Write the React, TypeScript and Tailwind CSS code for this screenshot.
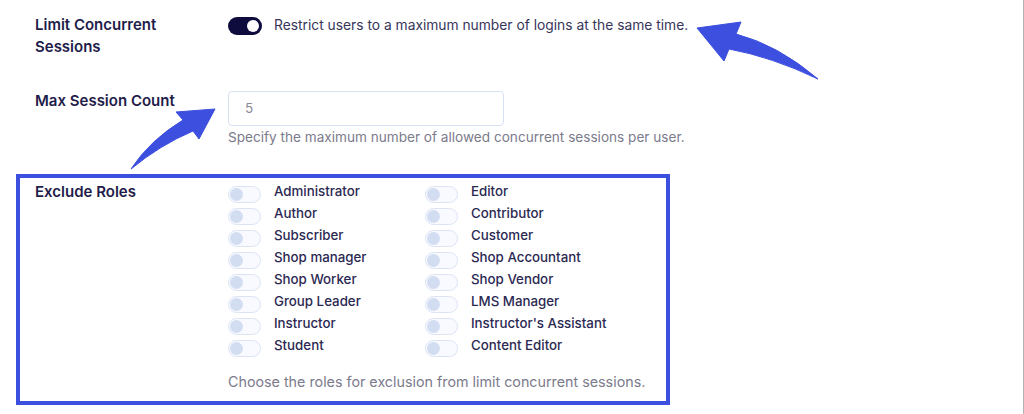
import React from "react";

const roles: [string, string][] = [
  ["Administrator", "Editor"],
  ["Author", "Contributor"],
  ["Subscriber", "Customer"],
  ["Shop manager", "Shop Accountant"],
  ["Shop Worker", "Shop Vendor"],
  ["Group Leader", "LMS Manager"],
  ["Instructor", "Instructor's Assistant"],
  ["Student", "Content Editor"],
];

function OffToggle() {
  return (
    <div className="mt-[4px] flex h-[17px] w-[33px] shrink-0 items-center rounded-full border border-[#dce4f4] bg-[#f8faff]">
      <div className="ml-[1px] h-[13px] w-[13px] rounded-full bg-[#d3ddf2]" />
    </div>
  );
}

function RoleItem({ name }: { name: string }) {
  return (
    <div className="flex h-[22px] items-center">
      <OffToggle />
      <span className="ml-[13px] text-[13.3px] font-medium text-[#2b2952]">{name}</span>
    </div>
  );
}

export default function App() {
  return (
    <div
      className="relative h-[414px] w-[1024px] overflow-hidden border-r border-[#b3b3b3] bg-white"
      style={{ fontFamily: "Inter, 'Noto Sans', sans-serif" }}
    >
      {/* Row 1 */}
      <div className="flex pl-[35px] pt-[14px]">
        <div className="w-[193px] text-[15px] font-semibold leading-[22px] text-[#1f1d4a]">
          Limit Concurrent
          <br />
          Sessions
        </div>
        <div className="flex h-[22px] items-center">
          <div className="mt-[2px] flex h-[18px] w-[34px] items-center justify-end rounded-full bg-[#0e0b3d]">
            <div className="mr-[3px] h-[12px] w-[12px] rounded-full bg-white" />
          </div>
          <span className="ml-[12px] text-[13.8px] text-[#37365a]">
            Restrict users to a maximum number of logins at the same time.
          </span>
        </div>
      </div>

      {/* Row 2 */}
      <div className="mt-[32px] flex pl-[35px]">
        <div className="w-[193px] text-[15px] font-semibold leading-[22px] text-[#1f1d4a]">
          Max Session Count
        </div>
        <div className="mt-[1px] flex flex-col">
          <div className="flex h-[35px] w-[276px] items-center rounded-[4px] border border-[#d8e1f2] bg-white px-[16px] text-[13.5px] text-[#8a8a99]">
            5
          </div>
          <div className="mt-[1px] text-[13.6px] leading-[20px] text-[#7b7b8c]">
            Specify the maximum number of allowed concurrent sessions per user.
          </div>
        </div>
      </div>

      {/* Row 3 box */}
      <div className="ml-[16px] mt-[27px] h-[231px] w-[654px] border-[4px] border-[#3d4fdf]">
        <div className="flex pl-[15px] pt-[3px]">
          <div className="w-[193px] text-[15px] font-semibold leading-[22px] text-[#1f1d4a]">
            Exclude Roles
          </div>
          <div className="flex flex-col">
            <div className="grid grid-cols-[197px_1fr]">
              {roles.map(([a, b]) => (
                <React.Fragment key={a}>
                  <RoleItem name={a} />
                  <RoleItem name={b} />
                </React.Fragment>
              ))}
            </div>
            <div className="mt-[15px] whitespace-nowrap text-[14.3px] leading-[20px] text-[#7b7b8c]">
              Choose the roles for exclusion from limit concurrent sessions.
            </div>
          </div>
        </div>
      </div>

      {/* Arrows overlay */}
      <svg
        className="pointer-events-none absolute left-0 top-0"
        width="1024"
        height="414"
        viewBox="0 0 1024 414"
      >
        <path
          d="M697,28 L741,22 L736,34 Q778,45 818,79 Q772,57 729,49 L724,61 Z"
          fill="#3d4fdf"
          stroke="#3d4fdf"
          strokeWidth="1"
          strokeLinejoin="round"
        />
        <path
          d="M215,109 L176,112 L183,120 Q150,140 131,169 Q160,145 193,131 L199,139 Z"
          fill="#3d4fdf"
          stroke="#3d4fdf"
          strokeWidth="1"
          strokeLinejoin="round"
        />
      </svg>
    </div>
  );
}
